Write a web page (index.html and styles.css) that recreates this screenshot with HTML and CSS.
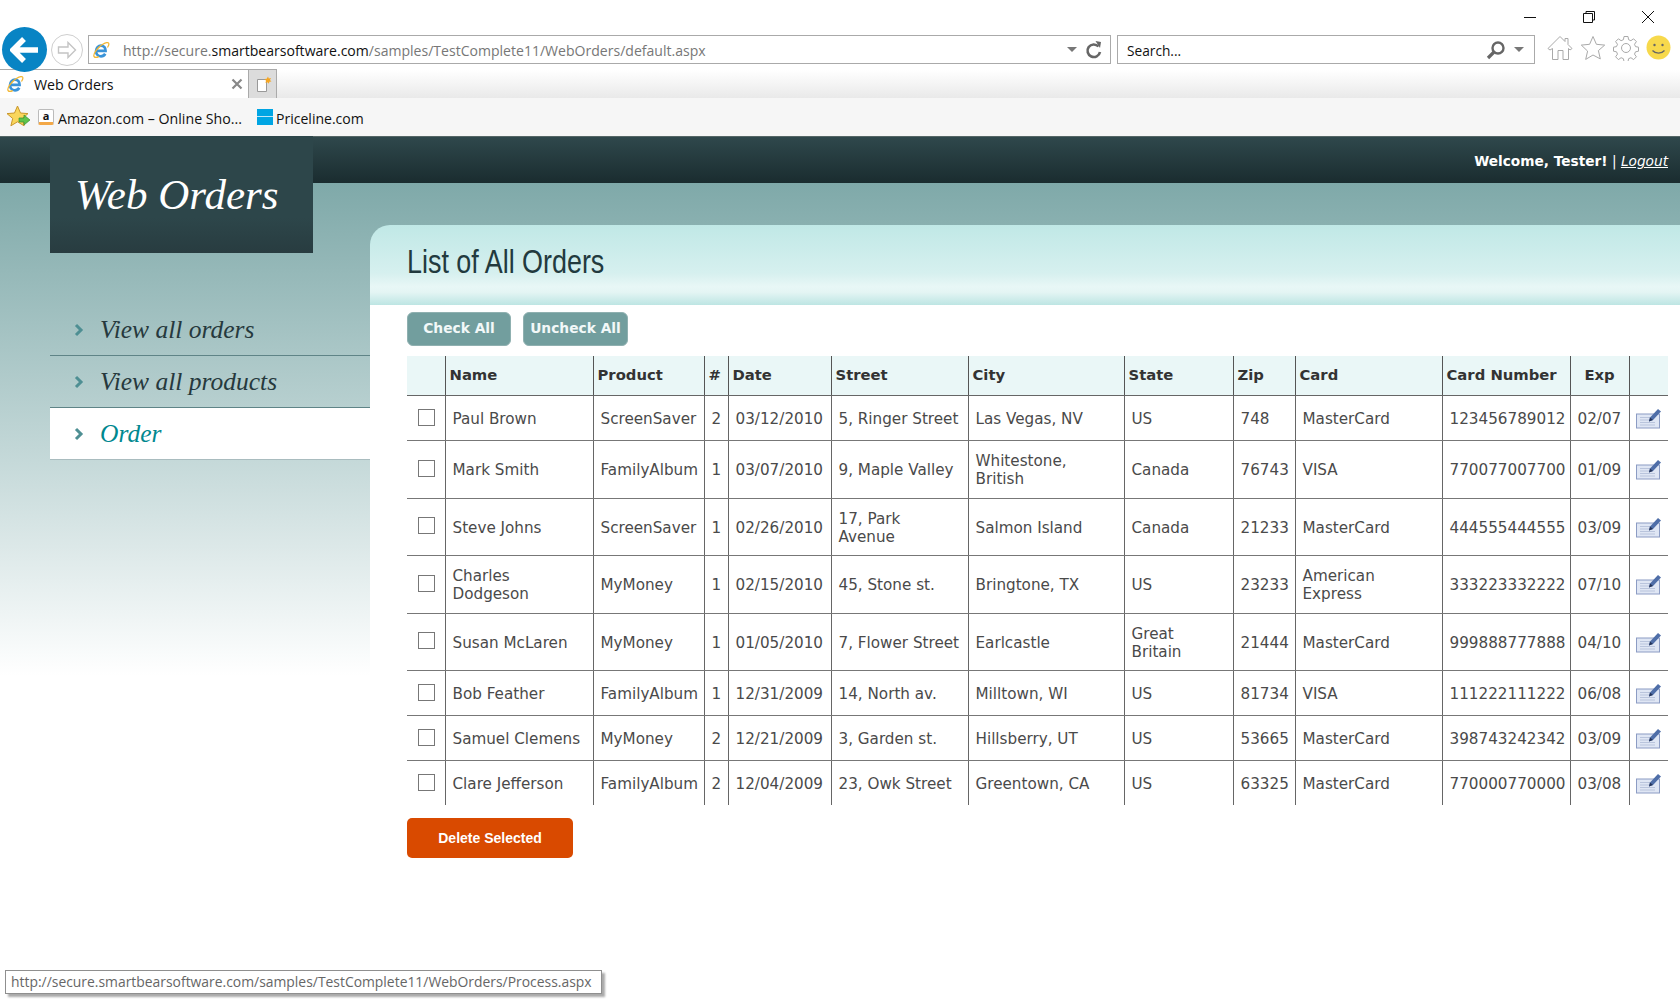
FILE: index.html
```html
<!DOCTYPE html>
<html>
<head>
  <title>Web Orders</title>
  <meta name="viewport" content="width=device-width, initial-scale=1">
  <link rel="stylesheet" href="styles.css">
</head>
<body>
  <svg class="defs" width="0" height="0">
    <symbol id="ie" viewBox="0 0 20 20">
      <path d="M4.500 11h10.600c.2-3.400-2-5.800-5-5.800-3 0-5.600 2.400-5.600 6s2.400 5.800 5.400 5.800c2.100 0 3.800-1 4.800-2.800" fill="none" stroke="#3a93d8" stroke-width="3"/>
      <path d="M2.500 17.500C.5 15 6 7 12 3.600c3.500-2 6-2.300 6.600-1 .5 1-.2 2.800-1.400 4.600M2.500 17.500c.8 1 3 .8 5-.2" fill="none" stroke="#f2b632" stroke-width="1.400"/>
    </symbol>
    <symbol id="edit" viewBox="0 0 25 21">
      <rect x=".5" y="6.500" width="23" height="14" fill="#dfe6f4" stroke="#8c9cc4"/>
      <path d="M4 10h10M4 12.500h10M4 15h15M4 17.500h15" stroke="#b9c4dc"/>
      <path d="M13 14l1-4L22 1.500l3 2.500-8 8.500z" fill="#4f6ea8"/>
      <path d="M13 14l1-4 3 2.500z" fill="#26365c"/>
    </symbol>
  </svg>

  <div class="browser">
    <div class="titlebar">
      <svg class="winbtn" width="14" height="14" viewBox="0 0 14 14"><path d="M1 7.500h12" stroke="#111"/></svg>
      <svg class="winbtn" width="14" height="14" viewBox="0 0 14 14"><path d="M1.500 3.500h9v9h-9zM4 3.500v-2h8.500v8.500h-2" fill="none" stroke="#111"/></svg>
      <svg class="winbtn" width="14" height="14" viewBox="0 0 14 14"><path d="M1 1l12 12M13 1L1 13" stroke="#111"/></svg>
    </div>

    <div class="navbar">
      <div class="back">
        <svg width="30" height="28" viewBox="0 0 30 28"><path d="M14 3L3 14l11 11M3 14h25" fill="none" stroke="#fff" stroke-width="5.500"/></svg>
      </div>
      <div class="forward">
        <svg width="20" height="18" viewBox="0 0 20 18"><path d="M11 1.500l7.500 7.500-7.500 7.500v-4.500H1.500V6H11z" fill="none" stroke="#c4c4c4" stroke-width="1.400"/></svg>
      </div>
      <div class="addressbar">
        <svg class="favicon" width="18" height="18"><use href="#ie"/></svg>
        <span class="url">http://secure.<b>smartbearsoftware.com</b>/samples/TestComplete11/WebOrders/default.aspx</span>
        <span class="arrow"></span>
        <svg width="18" height="20" viewBox="0 0 18 20"><path d="M13.500 6.500A6.300 6.300 0 1 0 15 12" fill="none" stroke="#666" stroke-width="2.600"/><path d="M10.500 1l5.500 1-1 6z" fill="#666"/></svg>
      </div>
      <div class="searchbar">
        <span class="search-text">Search...</span>
        <svg width="20" height="20" viewBox="0 0 20 20"><circle cx="12" cy="8" r="5.500" fill="none" stroke="#666" stroke-width="2.400"/><path d="M8 12l-6 6" stroke="#666" stroke-width="3.200"/></svg>
        <span class="arrow"></span>
      </div>
      <div class="toolicons">
        <svg width="26" height="26" viewBox="0 0 26 26"><path d="M1 13.500L13 1.500l5 5V3.500h3v6l4 4-2 1.500-1.500-1.500V24.500h-5.500v-9h-5v9H5.500V13.500L3 15z" fill="#fff" stroke="#a9a9a9"/></svg>
        <svg width="26" height="26" viewBox="0 0 26 26"><path d="M13 1.500l3.400 7.800 8.300.8-6.300 5.500 1.900 8.300L13 20l-7.300 4.400 1.900-8.300L1.300 10.100l8.300-.8z" fill="#fff" stroke="#a9a9a9"/></svg>
        <svg width="26" height="26" viewBox="0 0 26 26"><circle cx="13" cy="13" r="4.500" fill="none" stroke="#a9a9a9"/><path d="M11 1.500h4l.6 3.200 2.300 1 2.700-1.900 2.800 2.800-1.900 2.700 1 2.300 3 .6v4l-3 .6-1 2.300 1.900 2.700-2.800 2.800-2.700-1.900-2.300 1-.6 2.800h-4l-.6-2.800-2.300-1-2.700 1.900-2.800-2.800 1.900-2.700-1-2.300-3-.6v-4l3-.6 1-2.300-1.900-2.700 2.800-2.800 2.700 1.900 2.300-1z" fill="none" stroke="#a9a9a9"/></svg>
        <svg width="25" height="25" viewBox="0 0 25 25"><circle cx="12.500" cy="12.500" r="12" fill="#f7d94c"/><circle cx="8.500" cy="10" r="1.200" fill="#666"/><circle cx="16.500" cy="10" r="1.200" fill="#666"/><path d="M6.500 15.500c3 3.500 9 3.500 12 0" fill="none" stroke="#666" stroke-width="1.300"/></svg>
      </div>
    </div>

    <div class="tabstrip">
      <div class="tab">
        <svg class="favicon" width="18" height="18"><use href="#ie"/></svg>
        <span class="tab-title">Web Orders</span>
        <svg class="tab-close" width="12" height="12" viewBox="0 0 12 12"><path d="M1.500 1.500l9 9M10.500 1.500l-9 9" stroke="#888" stroke-width="2.200"/></svg>
      </div>
      <div class="newtab">
        <svg width="16" height="17" viewBox="0 0 16 17"><path d="M1.500 3.500h9v12h-9z" fill="#fff" stroke="#999"/><path d="M12 .5l.8 2 2.200-.5-1 2 1.500 1.500-2.200.2-.3 2-1.500-1.500-2 .8.500-2.200L8.500 3l2.200-.2z" fill="#f5a623"/></svg>
      </div>
    </div>

    <div class="favbar">
      <svg class="favstar" width="24" height="24" viewBox="0 0 24 24"><path d="M10.500 1l3 7 7.500.6-5.700 4.900 1.800 7.300-6.600-4-6.600 4 1.800-7.300L0 8.600 7.500 8z" fill="#f9d65c" stroke="#c9962c"/><path d="M12 13h5v-3l6 5-6 5v-3h-5z" fill="#5fc44c" stroke="#3a8f2e" stroke-width=".7"/></svg>
      <span class="site-icon amazon">a</span>
      <span class="fav-link">Amazon.com – Online Sho...</span>
      <span class="site-icon priceline"></span>
      <span class="fav-link priceline-link">Priceline.com</span>
    </div>
  </div>

  <div class="site">
    <div class="topbar">
      <b>Welcome, Tester!</b> | <a href="#">Logout</a>
    </div>
    <div class="logo">Web Orders</div>

    <div class="layout">
      <div class="sidebar">
        <ul class="menu">
          <li><svg width="10" height="14" viewBox="0 0 10 14"><path d="M2 2l5 5-5 5" fill="none" stroke="#4e8f93" stroke-width="3"/></svg><a href="#">View all orders</a></li>
          <li><svg width="10" height="14" viewBox="0 0 10 14"><path d="M2 2l5 5-5 5" fill="none" stroke="#4e8f93" stroke-width="3"/></svg><a href="#">View all products</a></li>
          <li class="selected"><svg width="10" height="14" viewBox="0 0 10 14"><path d="M2 2l5 5-5 5" fill="none" stroke="#4e8f93" stroke-width="3"/></svg><a href="#">Order</a></li>
        </ul>
      </div>

      <div class="main">
        <h1><span class="title-text">List of All Orders</span></h1>
        <div class="content">
          <div class="toolbar">
            <button class="btn check-btn">Check All</button>
            <button class="btn uncheck-btn">Uncheck All</button>
          </div>

          <table class="orders">
            <colgroup>
              <col class="c-check"><col class="c-name"><col class="c-product"><col class="c-qty"><col class="c-date"><col class="c-street"><col class="c-city"><col class="c-state"><col class="c-zip"><col class="c-card"><col class="c-number"><col class="c-exp"><col class="c-edit">
            </colgroup>
            <thead>
              <tr>
                <th></th>
                <th>Name</th>
                <th>Product</th>
                <th>#</th>
                <th>Date</th>
                <th>Street</th>
                <th>City</th>
                <th>State</th>
                <th>Zip</th>
                <th>Card</th>
                <th>Card Number</th>
                <th class="center">Exp</th>
                <th></th>
              </tr>
            </thead>
            <tbody>
              <tr>
                <td class="check"><input type="checkbox"></td>
                <td>Paul Brown</td>
                <td>ScreenSaver</td>
                <td>2</td>
                <td>03/12/2010</td>
                <td>5, Ringer Street</td>
                <td>Las Vegas, NV</td>
                <td>US</td>
                <td>748</td>
                <td>MasterCard</td>
                <td>123456789012</td>
                <td>02/07</td>
                <td class="edit"><svg width="25" height="21"><use href="#edit"/></svg></td>
              </tr>
              <tr>
                <td class="check"><input type="checkbox"></td>
                <td>Mark Smith</td>
                <td>FamilyAlbum</td>
                <td>1</td>
                <td>03/07/2010</td>
                <td>9, Maple Valley</td>
                <td>Whitestone,<br>British</td>
                <td>Canada</td>
                <td>76743</td>
                <td>VISA</td>
                <td>770077007700</td>
                <td>01/09</td>
                <td class="edit"><svg width="25" height="21"><use href="#edit"/></svg></td>
              </tr>
              <tr>
                <td class="check"><input type="checkbox"></td>
                <td>Steve Johns</td>
                <td>ScreenSaver</td>
                <td>1</td>
                <td>02/26/2010</td>
                <td>17, Park<br>Avenue</td>
                <td>Salmon Island</td>
                <td>Canada</td>
                <td>21233</td>
                <td>MasterCard</td>
                <td>444555444555</td>
                <td>03/09</td>
                <td class="edit"><svg width="25" height="21"><use href="#edit"/></svg></td>
              </tr>
              <tr>
                <td class="check"><input type="checkbox"></td>
                <td>Charles<br>Dodgeson</td>
                <td>MyMoney</td>
                <td>1</td>
                <td>02/15/2010</td>
                <td>45, Stone st.</td>
                <td>Bringtone, TX</td>
                <td>US</td>
                <td>23233</td>
                <td>American<br>Express</td>
                <td>333223332222</td>
                <td>07/10</td>
                <td class="edit"><svg width="25" height="21"><use href="#edit"/></svg></td>
              </tr>
              <tr>
                <td class="check"><input type="checkbox"></td>
                <td>Susan McLaren</td>
                <td>MyMoney</td>
                <td>1</td>
                <td>01/05/2010</td>
                <td>7, Flower Street</td>
                <td>Earlcastle</td>
                <td>Great<br>Britain</td>
                <td>21444</td>
                <td>MasterCard</td>
                <td>999888777888</td>
                <td>04/10</td>
                <td class="edit"><svg width="25" height="21"><use href="#edit"/></svg></td>
              </tr>
              <tr>
                <td class="check"><input type="checkbox"></td>
                <td>Bob Feather</td>
                <td>FamilyAlbum</td>
                <td>1</td>
                <td>12/31/2009</td>
                <td>14, North av.</td>
                <td>Milltown, WI</td>
                <td>US</td>
                <td>81734</td>
                <td>VISA</td>
                <td>111222111222</td>
                <td>06/08</td>
                <td class="edit"><svg width="25" height="21"><use href="#edit"/></svg></td>
              </tr>
              <tr>
                <td class="check"><input type="checkbox"></td>
                <td>Samuel Clemens</td>
                <td>MyMoney</td>
                <td>2</td>
                <td>12/21/2009</td>
                <td>3, Garden st.</td>
                <td>Hillsberry, UT</td>
                <td>US</td>
                <td>53665</td>
                <td>MasterCard</td>
                <td>398743242342</td>
                <td>03/09</td>
                <td class="edit"><svg width="25" height="21"><use href="#edit"/></svg></td>
              </tr>
              <tr>
                <td class="check"><input type="checkbox"></td>
                <td>Clare Jefferson</td>
                <td>FamilyAlbum</td>
                <td>2</td>
                <td>12/04/2009</td>
                <td>23, Owk Street</td>
                <td>Greentown, CA</td>
                <td>US</td>
                <td>63325</td>
                <td>MasterCard</td>
                <td>770000770000</td>
                <td>03/08</td>
                <td class="edit"><svg width="25" height="21"><use href="#edit"/></svg></td>
              </tr>
            </tbody>
          </table>

          <button class="delete-btn">Delete Selected</button>
        </div>
      </div>
    </div>
  </div>

  <div class="status-tip">http://secure.smartbearsoftware.com/samples/TestComplete11/WebOrders/Process.aspx</div>
</body>
</html>
```

FILE: styles.css
```css
html, body { margin: 0; padding: 0; height: 1000px; overflow: hidden; background-color: #fff; }
body { font-family: "DejaVu Sans", Verdana, sans-serif; position: relative; }
.defs { position: absolute; }

/* browser chrome */
.browser { height: 136px; font-family: "Open Sans", "Noto Sans", sans-serif; color: #111; }
.titlebar { height: 27px; display: flex; justify-content: flex-end; gap: 45px; padding: 10px 25px 0 0; box-sizing: border-box; }
.winbtn { display: block; }
.navbar { height: 43px; display: flex; align-items: flex-start; padding-left: 2px; position: relative; z-index: 1; }
.back { width: 45px; height: 45px; border-radius: 50%; background-color: #0884c4; display: flex; align-items: center; justify-content: center; flex: none; }
.forward { width: 32px; height: 32px; margin: 7px 0 0 4px; border: 1px solid #cfcfcf; border-radius: 50%; box-sizing: border-box; display: flex; align-items: center; justify-content: center; flex: none; }
.addressbar { width: 1023px; height: 29px; margin: 8px 0 0 5px; border: 1px solid #aaa; box-sizing: border-box; display: flex; align-items: center; padding: 0 7px 0 3px; flex: none; background-color: #fff; }
.url { font-size: 14.05px; color: #777; margin-left: 13px; flex: 1; white-space: nowrap; padding-top: 1px; }
.url b { font-weight: normal; color: #111; }
.arrow { width: 0; height: 0; border-left: 5px solid transparent; border-right: 5px solid transparent; border-top: 5px solid #777; margin-right: 8px; }
.searchbar { width: 418px; height: 29px; margin: 8px 0 0 6px; border: 1px solid #aaa; box-sizing: border-box; display: flex; align-items: center; padding: 0 2px 0 9px; flex: none; }
.search-text { font-size: 13.7px; flex: 1; padding-top: 1px; }
.searchbar svg { margin-right: 8px; }
.toolicons { display: flex; gap: 7px; margin: 8px 0 0 12px; flex: none; }
.tabstrip { height: 28px; display: flex; background: linear-gradient(#fff, #e9e9e9); }
.tab { width: 249px; height: 29px; margin-top: -1px; box-sizing: border-box; border-top: 1px solid #aaa; border-right: 1px solid #aaa; background-color: #fff; display: flex; align-items: center; padding: 0 5px 0 6px; }
.tab-title { font-size: 14.2px; margin-left: 10px; flex: 1; }
.newtab { width: 28px; box-sizing: border-box; border-right: 1px solid #aaa; border-top: 1px solid #aaa; margin-top: -1px; height: 29px; background-color: #dcdcdc; display: flex; align-items: center; justify-content: center; padding-left: 3px; }
.favbar { height: 38px; background-color: #f6f6f6; display: flex; align-items: center; padding-left: 7px; }
.favstar { margin-right: 7px; }
.site-icon { width: 16px; height: 16px; display: block; box-sizing: border-box; flex: none; }
.amazon { border: 1px solid #bbb; border-radius: 2px; background-color: #fff; font-size: 11px; font-weight: bold; line-height: 11px; text-align: center; border-bottom: 3px solid #f3a847; }
.priceline { background-color: #00a5e3; margin: 0 0 0 2px; background-image: linear-gradient(#00a5e3 7px, #bfe6f7 7px, #bfe6f7 8px, #00a5e3 8px); }
.fav-link { font-size: 14.2px; margin: 0 13px 0 4px; white-space: nowrap; padding-top: 2px; }
.priceline-link { margin-left: 3px; font-size: 14.05px; }

/* site */
.site { height: 864px; position: relative; background: linear-gradient(#fff 47px, #7fa9a9 47px, #c5d9d9 325px, #fff 540px); }
.topbar { height: 47px; box-sizing: border-box; border-top: 1px solid #566; background: linear-gradient(#2f484c, #1a2c2f); color: #fff; font-size: 13.7px; line-height: 48px; text-align: right; padding-right: 12px; }
.topbar a { color: #fff; font-style: italic; }
.logo { position: absolute; left: 50px; top: 0; width: 263px; height: 117px; background: linear-gradient(#2d464a 70%, #283c40); color: #fff; font-family: "Liberation Serif", Georgia, serif; font-style: italic; font-size: 43px; line-height: 118px; padding-left: 25px; box-sizing: border-box; }
.layout { display: flex; }
.sidebar { width: 370px; flex: none; padding: 121px 0 0 50px; box-sizing: border-box; }
.menu { list-style: none; margin: 0; padding: 0; }
.menu li { height: 52px; box-sizing: border-box; border-bottom: 1px solid #5f8487; display: flex; align-items: center; padding-left: 24px; }
.menu li:last-child { border-bottom-color: #a9bcbf; }
.menu a { font-family: "Liberation Serif", Georgia, serif; font-style: italic; font-size: 25.500px; color: #26393d; text-decoration: none; margin-left: 16px; }
.menu .selected { background-color: #fff; }
.menu .selected a { color: #00888f; }

.main { flex: 1; margin-top: 42px; min-width: 0; }
.main h1 { margin: 0; height: 80px; border-radius: 20px 0 0 0; background: linear-gradient(#c0e8e6, #d6f0ef 60%, #e8f7f6 77%, #e4f5f4 84%, #bde5e3); font-family: "Liberation Sans", sans-serif; font-weight: normal; font-size: 33px; line-height: 74px; color: #223a3e; padding-left: 37px; }
.title-text { display: inline-block; transform: scaleX(0.815); transform-origin: left center; white-space: nowrap; }
.content { background-color: #fff; padding: 7px 12px 0 37px; height: 559px; box-sizing: border-box; }
.toolbar { display: flex; gap: 12px; }
.btn { height: 34px; border: 1px solid #8fb0b0; border-radius: 6px; background-color: #729e9e; color: #f2f8f8; font-family: "DejaVu Sans", Verdana, sans-serif; font-weight: bold; font-size: 13.8px; padding: 0 0 3px; }
.check-btn { width: 104px; }
.uncheck-btn { width: 105px; }

table.orders { width: 1261px; table-layout: fixed; border-collapse: collapse; margin-top: 10px; font-size: 15.2px; line-height: 18.25px; color: #4a4a4a; }
.c-check { width: 38px; }
.c-name { width: 148px; }
.c-product { width: 111px; }
.c-qty { width: 24px; }
.c-date { width: 103px; }
.c-street { width: 137px; }
.c-city { width: 156px; }
.c-state { width: 109px; }
.c-zip { width: 62px; }
.c-card { width: 147px; }
.c-number { width: 128px; }
.c-exp { width: 59px; }
.c-edit { width: 39px; }
th { height: 39px; padding: 0 0 0 4px; background-color: #eaf7f7; color: #333; text-align: left; font-weight: bold; font-size: 14.8px; border-left: 1px solid #555; border-bottom: 1px solid #666; }
th:first-child, td:first-child { border-left: none; }
th.center { text-align: center; padding: 0; }
td { padding: 11px 0 9px 7px; border-left: 1px solid #666; border-bottom: 1px solid #777; white-space: nowrap; }
tbody tr:last-child td { border-bottom: none; }
td.check { padding: 0 0 2px 11px; }
td.edit { padding: 10px 0 10px 6px; }
td.edit svg { display: block; height: 24px; }
input[type=checkbox] { appearance: none; display: block; width: 17px; height: 17px; margin: 0; background-color: #fff; border: 1px solid #777; box-sizing: border-box; }
.delete-btn { display: block; width: 166px; height: 40px; margin-top: 13px; border: none; border-radius: 5px; background-color: #d94a00; color: #fff; font-family: "Liberation Sans", Arial, sans-serif; font-weight: bold; font-size: 14px; }

.status-tip { position: absolute; left: 5px; top: 970px; width: 597px; height: 24px; box-sizing: border-box; border: 1px solid #8f8f8f; background-color: #fff; box-shadow: 3px 3px 2px #aaa; font-family: "Open Sans", "Noto Sans", sans-serif; font-size: 13.9px; line-height: 22px; color: #666; padding-left: 5px; white-space: nowrap; overflow: hidden; }
```
